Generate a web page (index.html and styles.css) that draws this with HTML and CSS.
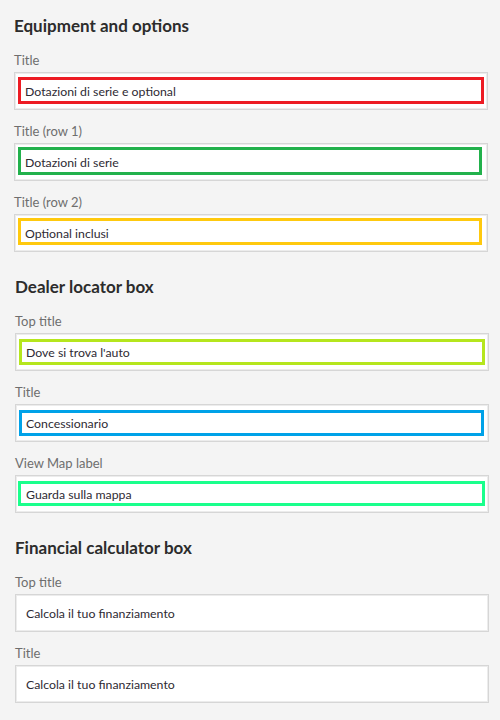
FILE: index.html
```html
<!DOCTYPE html>
<html lang="en">
<head>
<meta charset="utf-8">
<title>Equipment and options</title>
<link rel="stylesheet" href="styles.css">
</head>
<body>
<div class="panel">
  <section class="group">
    <h2 class="group-title">Equipment and options</h2>
    <div class="field">
      <div class="label">Title</div>
      <div class="textfield">Dotazioni di serie e optional<span class="mark mark-red"></span></div>
    </div>
    <div class="field">
      <div class="label">Title (row 1)</div>
      <div class="textfield">Dotazioni di serie<span class="mark mark-green"></span></div>
    </div>
    <div class="field">
      <div class="label">Title (row 2)</div>
      <div class="textfield">Optional inclusi<span class="mark mark-yellow"></span></div>
    </div>
  </section>
  <section class="group group-shift">
    <h2 class="group-title">Dealer locator box</h2>
    <div class="field">
      <div class="label">Top title</div>
      <div class="textfield">Dove si trova l'auto<span class="mark mark-lime"></span></div>
    </div>
    <div class="field">
      <div class="label">Title</div>
      <div class="textfield">Concessionario<span class="mark mark-blue"></span></div>
    </div>
    <div class="field">
      <div class="label">View Map label</div>
      <div class="textfield">Guarda sulla mappa<span class="mark mark-mint"></span></div>
    </div>
  </section>
  <section class="group group-shift">
    <h2 class="group-title">Financial calculator box</h2>
    <div class="field">
      <div class="label">Top title</div>
      <div class="textfield">Calcola il tuo finanziamento</div>
    </div>
    <div class="field">
      <div class="label">Title</div>
      <div class="textfield">Calcola il tuo finanziamento</div>
    </div>
  </section>
</div>
</body>
</html>
```
FILE: styles.css
```css
html, body {
  margin: 0;
  padding: 0;
  background: #f4f4f4;
}
body {
  font-family: "Lato", "Open Sans", sans-serif;
  color: #2c2c2c;
}
.panel {
  padding: 14px 12px 0 14px;
  display: flex;
  flex-direction: column;
  gap: 23px;
}
.group {
  display: flex;
  flex-direction: column;
  gap: 13px;
}
.group-shift {
  margin-left: 1px;
  margin-right: -1px;
}
.group-title {
  margin: 0 0 1px 0;
  font-size: 17px;
  line-height: 24px;
  font-weight: 700;
  color: #2c2c2c;
}
.field {
  display: flex;
  flex-direction: column;
  gap: 4px;
}
.label {
  font-size: 13px;
  line-height: 16px;
  color: #6e6e6e;
}
.textfield {
  position: relative;
  box-sizing: border-box;
  height: 38px;
  background: #fff;
  border: 1px solid #d6d6d6;
  box-shadow: inset 0 0 0 1px #ececec;
  padding: 0 10px;
  display: flex;
  align-items: center;
  font-size: 12.3px;
  color: #2e2a33;
}
.mark {
  position: absolute;
  border: 3px solid;
}
.mark-red    { border-color: #ed1c24; left: 3px; right: 3px; top: 4px; bottom: 5px; }
.mark-green  { border-color: #22b14c; left: 3px; right: 5px; top: 3px; bottom: 5px; }
.mark-yellow { border-color: #ffc90e; left: 3px; right: 5px; top: 3px; bottom: 6px; }
.mark-lime   { border-color: #b5e61d; left: 3px; right: 3px; top: 5px; bottom: 5px; }
.mark-blue   { border-color: #00a2e8; left: 3px; right: 4px; top: 5px; bottom: 5px; }
.mark-mint   { border-color: #1aff8c; left: 2px; right: 3px; top: 5px; bottom: 6px; }
```
